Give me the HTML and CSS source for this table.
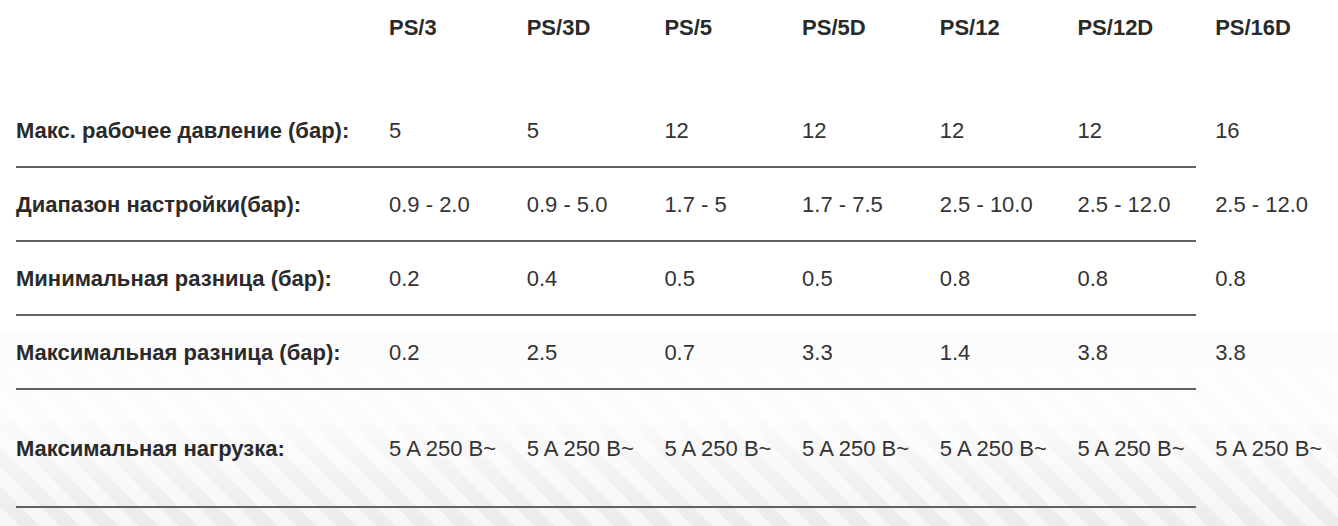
FILE: index.html
```html
<!DOCTYPE html>
<html lang="ru">
<head>
<meta charset="utf-8">
<title>PS</title>
<link rel="stylesheet" href="styles.css">
</head>
<body>
<div class="specs">
  <div class="row head">
    <div class="label"></div>
    <div>PS/3</div><div>PS/3D</div><div>PS/5</div><div>PS/5D</div><div>PS/12</div><div>PS/12D</div><div>PS/16D</div>
  </div>
  <div class="row line">
    <div class="label">Макс. рабочее давление (бар):</div>
    <div>5</div><div>5</div><div>12</div><div>12</div><div>12</div><div>12</div><div>16</div>
  </div>
  <div class="row line">
    <div class="label">Диапазон настройки(бар):</div>
    <div>0.9 - 2.0</div><div>0.9 - 5.0</div><div>1.7 - 5</div><div>1.7 - 7.5</div><div>2.5 - 10.0</div><div>2.5 - 12.0</div><div>2.5 - 12.0</div>
  </div>
  <div class="row line">
    <div class="label">Минимальная разница (бар):</div>
    <div>0.2</div><div>0.4</div><div>0.5</div><div>0.5</div><div>0.8</div><div>0.8</div><div>0.8</div>
  </div>
  <div class="row line">
    <div class="label">Максимальная разница (бар):</div>
    <div>0.2</div><div>2.5</div><div>0.7</div><div>3.3</div><div>1.4</div><div>3.8</div><div>3.8</div>
  </div>
  <div class="row line tall">
    <div class="label">Максимальная нагрузка:</div>
    <div>5 A 250 B~</div><div>5 A 250 B~</div><div>5 A 250 B~</div><div>5 A 250 B~</div><div>5 A 250 B~</div><div>5 A 250 B~</div><div>5 A 250 B~</div>
  </div>
</div>
</body>
</html>
```

FILE: styles.css
```css
html {
  background:
    linear-gradient(180deg, #ffffff 0, #ffffff 334px, #fbfbfb 335px, rgba(253,253,253,0.96) 370px, rgba(255,255,255,0.8) 420px, rgba(255,255,255,0.1) 526px),
    repeating-linear-gradient(45deg, #f5f5f5 0 14px, #e9e9e9 14px 28px);
  min-height: 100%;
}
body {
  margin: 0;
  padding: 0 0 0 16px;
  font-family: "Liberation Sans", Arial, sans-serif;
  color: #333;
}
.specs {
  display: flex;
  flex-direction: column;
}
.row {
  display: grid;
  grid-template-columns: 373px repeat(7, 137.7px);
  align-items: center;
  font-size: 22px;
  line-height: 25px;
  white-space: nowrap;
}
.label,
.head {
  font-weight: bold;
  color: #2a2a2a;
}
.head {
  height: 94px;
  align-items: start;
  padding-top: 15px;
  box-sizing: border-box;
}
.line {
  height: 74px;
  box-sizing: border-box;
  padding-bottom: 2px;
  background: linear-gradient(#626262, #626262) left bottom / 1180px 2px no-repeat;
}
.line.tall {
  height: 118px;
}
```
